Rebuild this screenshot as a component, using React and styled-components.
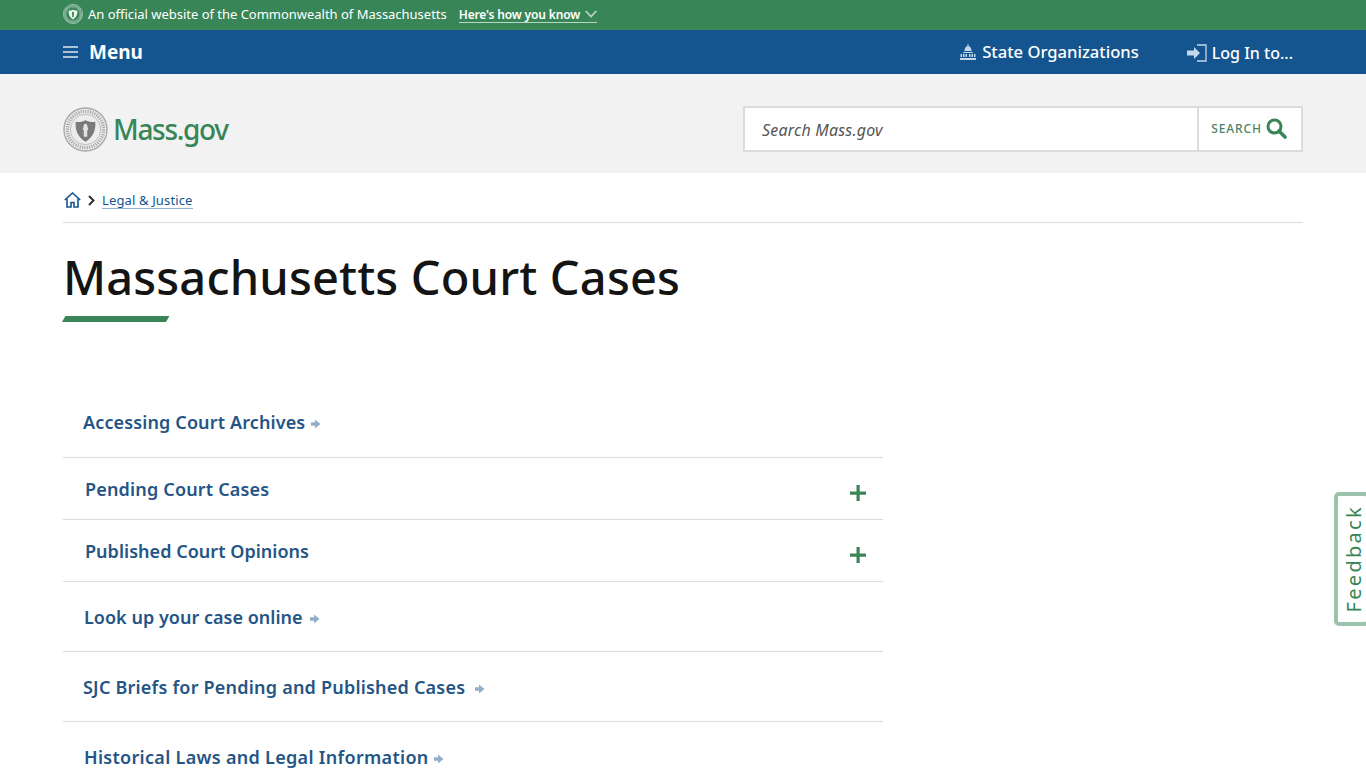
import React from "react";
import styled, { createGlobalStyle } from "styled-components";

const GlobalStyle = createGlobalStyle`
  html, body {
    margin: 0;
    padding: 0;
    height: 768px;
    overflow: hidden;
    background: #fff;
    font-family: "Noto Sans", "Open Sans", sans-serif;
  }
  * { box-sizing: border-box; }
  a { text-decoration: none; color: inherit; }
`;

const Wrap = styled.div`
  width: 1240px;
  margin: 0 auto;
  display: flex;
  align-items: center;
`;

const Banner = styled.div`
  height: 30px;
  background: #388557;
  color: #fff;
  font-size: 13px;
`;

const BannerRow = styled(Wrap)`
  height: 28px;
`;

const BannerText = styled.span`
  margin-left: 5px;
  letter-spacing: -0.02px;
`;

const KnowLink = styled.a`
  display: flex;
  align-items: center;
  margin-left: 12px;
  height: 17px;
  margin-top: 1px;
  font-size: 12px;
  font-weight: 600;
  letter-spacing: -0.15px;
  border-bottom: 1px solid #b9d6c6;
  svg { margin-left: 5px; }
`;

const Nav = styled.div`
  height: 44px;
  background: #14558f;
  color: #fff;
`;

const NavRow = styled(Wrap)`
  height: 44px;
`;

const MenuButton = styled.a`
  display: flex;
  align-items: center;
  font-size: 19px;
  font-weight: 700;
  svg { margin-right: 11px; }
`;

const NavLinks = styled.div`
  margin-left: auto;
  display: flex;
  align-items: center;
  margin-right: 10px;
`;

const NavLink = styled.a`
  display: flex;
  align-items: center;
  font-size: ${(p) => p.$size}px;
  font-weight: 500;
  margin-left: ${(p) => p.$gap || 0}px;
  padding-top: ${(p) => p.$drop || 0}px;
  padding-bottom: ${(p) => p.$lift || 0}px;
  svg { margin-right: ${(p) => p.$iconGap}px; }
`;

const Header = styled.div`
  height: 99px;
  background: #f2f2f2;
`;

const HeaderRow = styled(Wrap)`
  height: 99px;
  justify-content: space-between;
  padding-top: 11px;
`;

const Logo = styled.a`
  display: flex;
  align-items: center;
`;

const LogoText = styled.span`
  font-size: 28px;
  font-weight: 500;
  color: #388557;
  margin-left: 5px;
  letter-spacing: -1.3px;
`;

const SearchBox = styled.form`
  display: flex;
  width: 560px;
  height: 46px;
  border: 2px solid #dcdcdc;
  background: #fff;
`;

const SearchInput = styled.input`
  flex: 1;
  border: 0;
  outline: 0;
  padding: 2px 17px 0;
  font: italic 400 16px "Noto Sans", sans-serif;
  letter-spacing: 0.2px;
  background: transparent;
  &::placeholder { color: #555; opacity: 1; }
`;

const SearchButton = styled.button`
  width: 104px;
  border: 0;
  border-left: 2px solid #dcdcdc;
  background: #fff;
  color: #4d8466;
  display: flex;
  align-items: center;
  justify-content: center;
  font: 500 12px "Noto Sans", sans-serif;
  letter-spacing: 0.9px;
  padding: 0 2px 2px 0;
  svg { margin-left: 4px; }
`;

const Crumbs = styled(Wrap)`
  height: 50px;
  border-bottom: 1px solid #dcdcdc;
  padding-top: 5px;
`;

const HomeGlyph = styled.svg`
  margin-left: 1px;
`;

const CrumbArrow = styled.svg`
  margin: 0 7px 0 7px;
`;

const CrumbLink = styled.a`
  font-size: 13px;
  letter-spacing: 0.14px;
  color: #14558f;
  border-bottom: 1px solid #8fb1cf;
  line-height: 16px;
`;

const Title = styled.h1`
  width: 1240px;
  margin: 22px auto 0;
  font-size: 47px;
  font-weight: 500;
  letter-spacing: 0.16px;
  line-height: 64px;
  color: #141414;
`;

const TitleRule = styled.div`
  width: 104px;
  height: 6px;
  margin-left: 62px;
  margin-top: 7px;
  background: #388557;
  transform: skewX(-30deg);
  transform-origin: bottom left;
`;

const List = styled.div`
  width: 820px;
  margin: 66px 0 0 63px;
`;

const Row = styled.div`
  height: ${(p) => p.$h}px;
  display: flex;
  align-items: center;
  padding-left: ${(p) => p.$pad}px;
  padding-bottom: ${(p) => p.$lift || 0}px;
  border-bottom: 1px solid #dcdcdc;
`;

const RowLink = styled.a`
  font-size: 18px;
  font-weight: 600;
  letter-spacing: ${(p) => p.$track}px;
  color: #255585;
`;

const RowArrow = styled.svg`
  margin-left: ${(p) => p.$gap}px;
  vertical-align: 0;
`;

const PlusMark = styled.svg`
  margin-left: auto;
  margin-right: 17px;
  margin-top: 9px;
`;

const Feedback = styled.a`
  position: fixed;
  right: -4px;
  top: 492px;
  width: 36px;
  height: 134px;
  border: 4px solid #9bc2ab;
  border-radius: 5px;
  background: #fff;
  color: #388557;
  display: flex;
  align-items: center;
  justify-content: center;
  font-size: 20px;
  letter-spacing: 2.3px;
  writing-mode: vertical-rl;
  padding-left: 2px;
  span { transform: rotate(180deg); }
`;

// state seal, drawn small so only the rough shapes read
const Seal = ({ size, light }) => {
  const ring = light ? "#d5e6dc" : "#a8a8a8";
  const shield = light ? "#eef6f1" : "#7a7a7a";
  const ground = light ? "#388557" : "#ececec";
  return (
    <svg width={size} height={size} viewBox="0 0 46 46">
      <circle cx="23" cy="23" r="22" fill={ground} stroke={ring} strokeWidth="1.4" />
      <circle cx="23" cy="23" r="18.5" fill="none" stroke={ring} strokeWidth="3.5" strokeDasharray="1.2 1.2" />
      <circle cx="23" cy="23" r="15.5" fill={ground} stroke={ring} strokeWidth="0.7" />
      <path d="M13 15c3.5.8 7 0 10-1.5 3 1.500 6.500 2.300 10 1.500 .8 9-2.500 16-10 20.500-7.500-4.500-10.800-11.500-10-20.500z" fill={shield} />
      <path d="M23 17c1.300 0 1.800.9 1.800 1.900l1 4-1 1v6.600h-3.600v-6.600l-1-1 1-4c0-1 .5-1.900 1.800-1.900z" fill={light ? "#388557" : "#e2e2e2"} />
    </svg>
  );
};

const LinkArrow = ({ gap }) => (
  <RowArrow $gap={gap} width="10" height="10" viewBox="0 0 10 10">
    <path d="M0 3.200h4V.5L9.500 5 4 9.500V6.800H0z" fill="#92aec8" />
  </RowArrow>
);

const Chevron = () => (
  <svg width="12" height="8" viewBox="0 0 12 8" fill="none" stroke="#b9d6c6" strokeWidth="1.8">
    <path d="M.7 1l5.300 5.500L11.300 1" />
  </svg>
);

const MenuGlyph = () => (
  <svg width="15" height="12" viewBox="0 0 15 12" stroke="#dbe7f2" strokeWidth="1.5">
    <path d="M0 1h15M0 6h15M0 11h15" />
  </svg>
);

const CapitolGlyph = () => (
  <svg width="16" height="16" viewBox="0 0 16 16" fill="#c5d8e9">
    <path d="M7.500 0h1v2h-1z" />
    <path d="M4.500 7c0-3 1.500-5 3.500-5s3.500 2 3.500 5z" />
    <path d="M3 8h10v1H3z" />
    <path d="M3 10h1.500v3H3zM5.500 10H7v3H5.500zM9 10h1.500v3H9zM11.500 10H13v3h-1.500zM.5 10H2v3H.5zM14 10h1.500v3H14z" />
    <path d="M0 14h16v2H0z" />
  </svg>
);

const LoginGlyph = () => (
  <svg width="20" height="18" viewBox="0 0 20 18">
    <path d="M0 6.500h7V3l6 6-6 6v-3.500H0z" fill="#c5d8e9" />
    <path d="M10 1h9v16h-9" fill="none" stroke="#c5d8e9" strokeWidth="1.300" />
  </svg>
);

const SearchGlyph = () => (
  <svg width="21" height="21" viewBox="0 0 21 21" fill="none" stroke="#388557">
    <circle cx="8.500" cy="8.500" r="6.500" strokeWidth="3" />
    <path d="M13 13l6 6" strokeWidth="3.600" strokeLinecap="round" />
  </svg>
);

const Plus = () => (
  <PlusMark width="16" height="16" viewBox="0 0 16 16" fill="#388557">
    <path d="M6.500 0h3.200v6.500H16v3.200H9.700V16H6.500V9.700H0V6.500h6.500z" />
  </PlusMark>
);

const rows = [
  { text: "Accessing Court Archives", h: 70, pad: 20, gap: 6, track: 0.13, lift: 2 },
  { text: "Pending Court Cases", h: 62, pad: 22, track: 0.17, plus: true },
  { text: "Published Court Opinions", h: 62, pad: 22, track: 0.03, plus: true },
  { text: "Look up your case online", h: 70, pad: 21, gap: 7, track: 0.02, lift: 0 },
  { text: "SJC Briefs for Pending and Published Cases", h: 70, pad: 20, gap: 10, track: 0.21 },
  { text: "Historical Laws and Legal Information", h: 70, pad: 21, gap: 5, track: 0.3 },
];

export default function App() {
  return (
    <>
      <GlobalStyle />
      <Banner>
        <BannerRow>
          <Seal size={20} light />
          <BannerText>An official website of the Commonwealth of Massachusetts</BannerText>
          <KnowLink href="#">
            Here's how you know
            <Chevron />
          </KnowLink>
        </BannerRow>
      </Banner>
      <Nav>
        <NavRow>
          <MenuButton href="#">
            <MenuGlyph />
            Menu
          </MenuButton>
          <NavLinks>
            <NavLink href="#" $size={16.6} $iconGap={6} $lift={1}>
              <CapitolGlyph />
              State Organizations
            </NavLink>
            <NavLink href="#" $size={16} $gap={48} $iconGap={5} $drop={1}>
              <LoginGlyph />
              Log In to...
            </NavLink>
          </NavLinks>
        </NavRow>
      </Nav>
      <Header>
        <HeaderRow>
          <Logo href="#">
            <Seal size={45} />
            <LogoText>Mass.gov</LogoText>
          </Logo>
          <SearchBox>
            <SearchInput placeholder="Search Mass.gov" />
            <SearchButton type="button">
              SEARCH
              <SearchGlyph />
            </SearchButton>
          </SearchBox>
        </HeaderRow>
      </Header>
      <Crumbs>
        <HomeGlyph width="17" height="16" viewBox="0 0 17 16" fill="none" stroke="#14558f" strokeWidth="1.600">
          <path d="M.8 8l7.700-7 7.700 7" />
          <path d="M3 6.500V15h4v-4.500h3V15h4V6.500" />
        </HomeGlyph>
        <CrumbArrow width="7" height="11" viewBox="0 0 7 11" fill="none" stroke="#333" strokeWidth="2">
          <path d="M1 1l4.500 4.500L1 10" />
        </CrumbArrow>
        <CrumbLink href="#">Legal &amp; Justice</CrumbLink>
      </Crumbs>
      <Title>Massachusetts Court Cases</Title>
      <TitleRule />
      <List>
        {rows.map((r) => (
          <Row key={r.text} $h={r.h} $pad={r.pad} $lift={r.lift}>
            <RowLink href="#" $track={r.track}>
              {r.text}
              {!r.plus && <LinkArrow gap={r.gap} />}
            </RowLink>
            {r.plus && <Plus />}
          </Row>
        ))}
      </List>
      <Feedback href="#">
        <span>Feedback</span>
      </Feedback>
    </>
  );
}
